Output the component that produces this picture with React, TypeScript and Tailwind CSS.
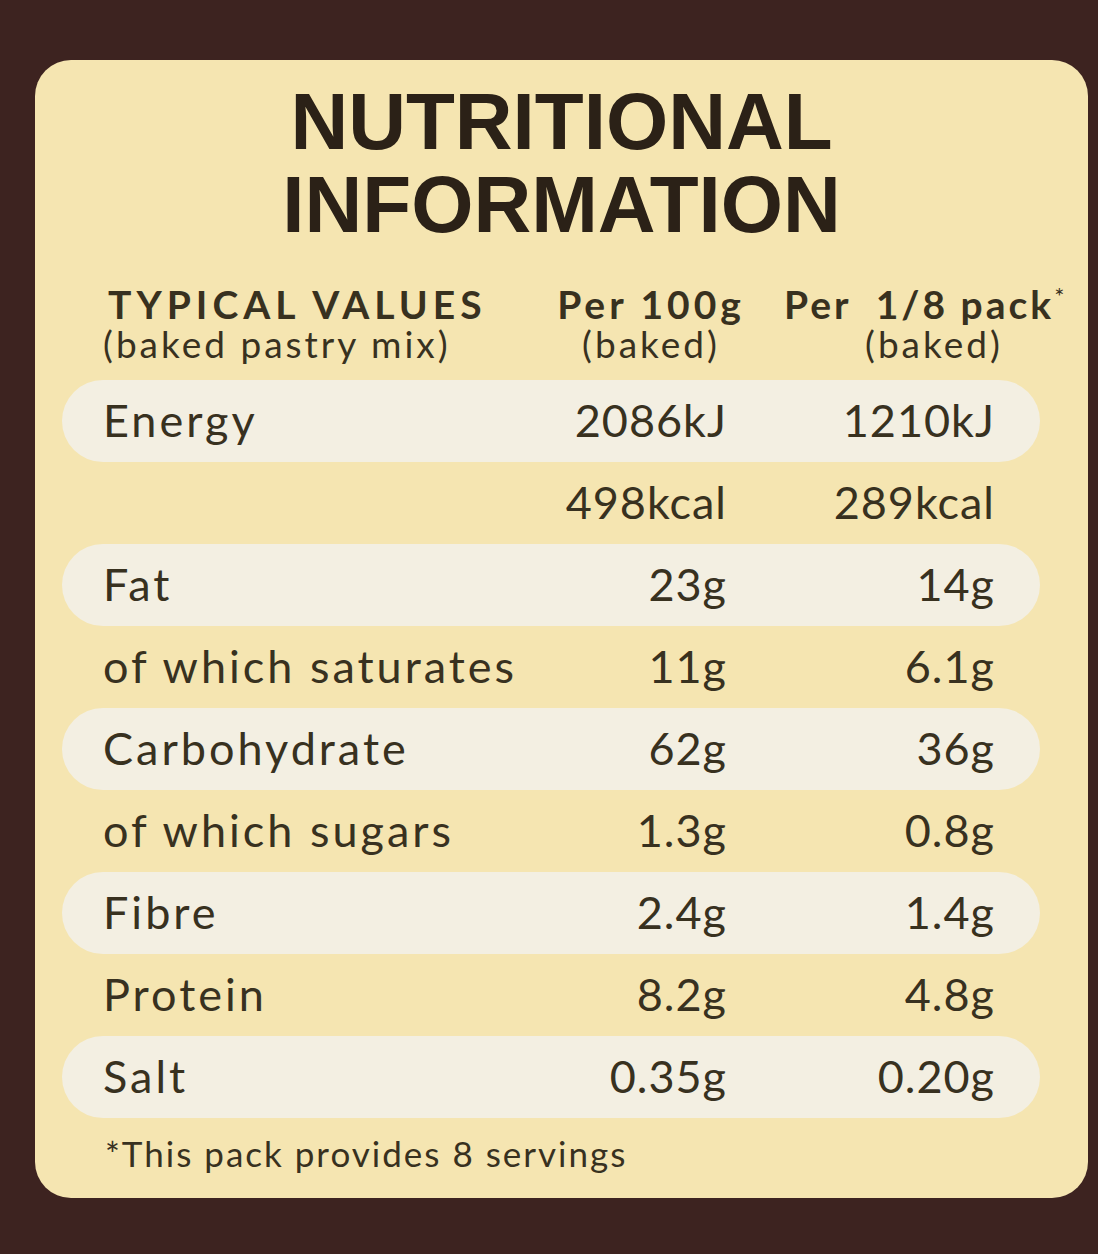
const rows = [
  { name: "Energy", per100: "2086kJ", perPack: "1210kJ", band: true },
  { name: "", per100: "498kcal", perPack: "289kcal", band: false },
  { name: "Fat", per100: "23g", perPack: "14g", band: true },
  { name: "of which saturates", per100: "11g", perPack: "6.1g", band: false },
  { name: "Carbohydrate", per100: "62g", perPack: "36g", band: true },
  { name: "of which sugars", per100: "1.3g", perPack: "0.8g", band: false },
  { name: "Fibre", per100: "2.4g", perPack: "1.4g", band: true },
  { name: "Protein", per100: "8.2g", perPack: "4.8g", band: false },
  { name: "Salt", per100: "0.35g", perPack: "0.20g", band: true },
];

export default function App() {
  return (
    <div className="w-[1098px] h-[1254px] bg-[#3d2320] pt-[60px] pl-[35px] overflow-hidden">
      <section className="w-[1053px] h-[1138px] bg-[#f5e5b1] rounded-[36px] text-[#38311f] font-['Lato','Open_Sans',sans-serif]">
        <h1 className="pt-[20px] text-center text-[#2b2117] text-[80px] leading-[83px] font-bold font-['Liberation_Sans',Arial,sans-serif]">
          NUTRITIONAL
          <br />
          INFORMATION
        </h1>

        <div className="flex mt-[38px] pl-[73px]">
          <div className="w-[432px]">
            <p className="h-[40px] text-[39px] leading-[40px] font-bold tracking-[5px]">TYPICAL VALUES</p>
            <p className="h-[40px] -ml-[5px] text-[37px] leading-[40px] tracking-[3px]">(baked pastry mix)</p>
          </div>

          <div className="flex flex-col items-center w-[222px]">
            <p className="h-[40px] text-[39px] leading-[40px] font-bold tracking-[4px]">Per 100g</p>
            <p className="h-[40px] text-[37px] leading-[40px] tracking-[3px]">(baked)</p>
          </div>

          <div className="flex flex-col items-start ml-[22px]">
            <p className="h-[40px] text-[39px] leading-[40px] font-bold tracking-[3px] whitespace-pre">
              Per  1/8 pack
              <span className="relative -top-[14px] text-[24px] leading-[0] font-normal">*</span>
            </p>
            <p className="h-[40px] ml-[81px] text-[37px] leading-[40px] tracking-[3px]">(baked)</p>
          </div>
        </div>

        <div className="flex flex-col mt-[16px]">
          {rows.map((row) => (
            <div
              key={row.per100}
              className={`grid grid-cols-[1fr_200px_268px] items-center ml-[27px] w-[978px] h-[82px] pl-[41px] pr-[45px] text-[45px] ${
                row.band ? "bg-[#f3efe2] rounded-full" : ""
              }`}
            >
              <span className="tracking-[3px]">{row.name}</span>
              <span className="text-right tracking-[1px]">{row.per100}</span>
              <span className="text-right tracking-[1px]">{row.perPack}</span>
            </div>
          ))}
        </div>

        <p className="mt-[15px] pl-[70px] text-[35px] leading-[40px] tracking-[2px]">
          *This pack provides 8 servings
        </p>
      </section>
    </div>
  );
}
